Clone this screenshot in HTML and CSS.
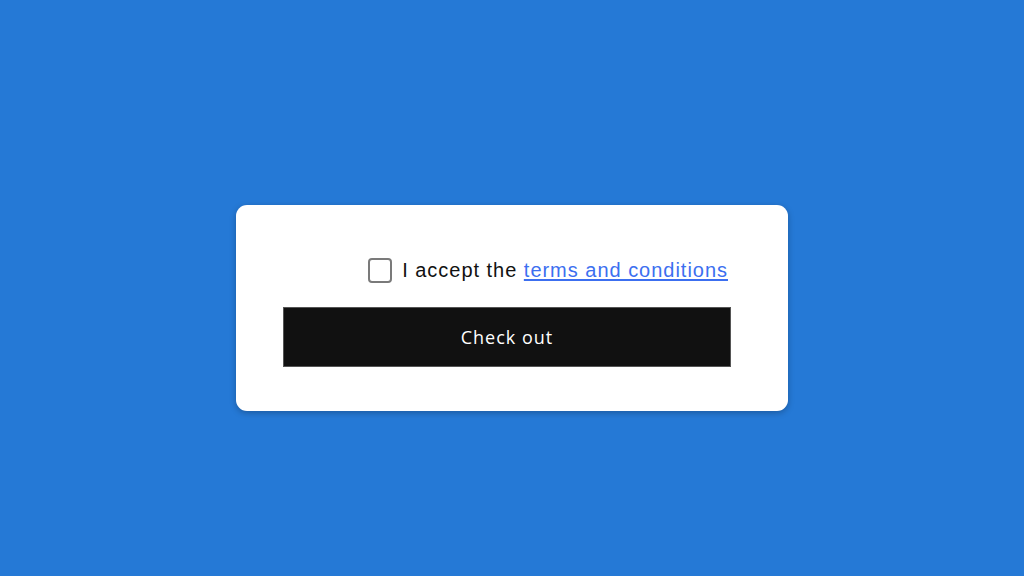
FILE: index.html
```html
<!DOCTYPE html>
<html lang="en">
<head>
<meta charset="utf-8">
<title>Checkout</title>
<link rel="stylesheet" href="styles.css">
</head>
<body>
  <main class="stage">
    <form class="card">
      <label class="accept">
        <input type="checkbox" class="accept-box">
        <span class="accept-text">I accept the <a href="#" class="accept-link">terms and conditions</a></span>
      </label>
      <button type="button" class="checkout">Check out</button>
    </form>
  </main>
</body>
</html>
```
FILE: styles.css
```css
html, body {
  margin: 0;
  padding: 0;
  height: 100%;
}

body {
  background: #2579d6;
  font-family: "Liberation Sans", Arial, sans-serif;
}

.stage {
  height: 100%;
  display: flex;
  justify-content: center;
  align-items: flex-start;
  padding-top: 205px;
  box-sizing: border-box;
}

.card {
  width: 552px;
  height: 206px;
  box-sizing: border-box;
  background: #ffffff;
  border-radius: 11px;
  box-shadow: 0 2px 6px rgba(0, 0, 0, 0.25);
  padding: 53px 57px 0 47px;
  display: flex;
  flex-direction: column;
}

.accept {
  display: flex;
  align-items: center;
  justify-content: flex-end;
  gap: 10px;
  height: 25px;
  padding-right: 3px;
}

.accept-box {
  appearance: none;
  -webkit-appearance: none;
  margin: 0;
  width: 24px;
  height: 25px;
  border: 2px solid #7a7a7a;
  border-radius: 4px;
  background: #fff;
  box-sizing: border-box;
}

.accept-text {
  font-size: 20px;
  color: #111;
  letter-spacing: 0.98px;
}

.accept-link {
  color: #3c6ff0;
  text-decoration: underline;
  text-underline-offset: 2px;
}

.checkout {
  margin-top: 24px;
  width: 448px;
  height: 60px;
  background: #111111;
  border: 1px solid #555;
  color: #ffffff;
  font-family: "Open Sans", sans-serif;
  font-size: 18px;
  letter-spacing: 1px;
  cursor: pointer;
  padding: 0;
}
```
